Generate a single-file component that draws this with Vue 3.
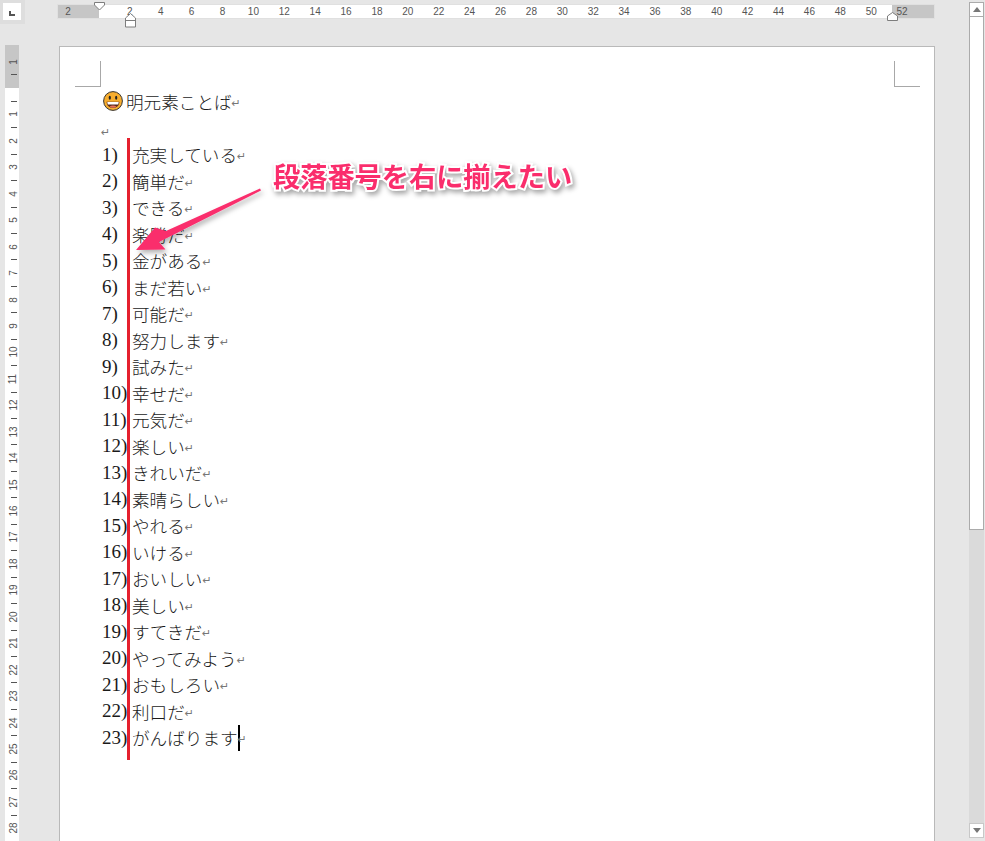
<script setup>
const items = ['充実している','簡単だ','できる','楽勝だ','金がある','まだ若い','可能だ','努力します','試みた','幸せだ','元気だ','楽しい','きれいだ','素晴らしい','やれる','いける','おいしい','美しい','すてきだ','やってみよう','おもしろい','利口だ','がんばります']
const hNums = ['2','']
for (let n = 2; n <= 50; n += 2) hNums.push(String(n))
hNums.push('52')
const vRows = [{t:'1'},{k:1},{},{k:1}]
for (let n = 1; n <= 28; n++) { vRows.push({t:String(n)}); if (n < 28) vRows.push({k:1}) }
</script>

<template>
  <div class="app">
    <div class="corner"><div class="corner-box"><span class="corner-l"></span></div></div>
    <div class="hruler">
      <span v-for="(n,i) in hNums" :key="i" class="hnum">{{ n }}</span>
    </div>
    <div class="scroll">
      <div class="sbtn"><span class="tri-up"></span></div>
      <div class="thumb"></div>
      <div class="track"></div>
      <div class="sbtn down"><span class="tri-down"></span></div>
    </div>
    <div class="vruler">
      <div v-for="(r,i) in vRows" :key="i" class="vrow">
        <span v-if="r.t" class="vnum">{{ r.t }}</span>
        <span v-else-if="r.k" class="vtick"></span>
      </div>
    </div>
    <div class="page">
      <div class="crops"><span class="crop left"></span><span class="crop right"></span></div>
      <div class="line heading">
        <svg class="emoji" viewBox="0 0 20 20" width="20" height="20">
          <circle cx="10" cy="10" r="9.4" fill="#f7ad2e" stroke="#333" stroke-width="1"/>
          <ellipse cx="6.800" cy="6.800" rx="1.100" ry="2" fill="#222"/>
          <ellipse cx="13.200" cy="6.800" rx="1.100" ry="2" fill="#222"/>
          <path d="M3.600 10.800h12.800c0 3.800-2.900 6.200-6.400 6.200s-6.400-2.400-6.400-6.200z" fill="#5a2a1a"/>
          <path d="M4.300 11h11.400c0 1-.2 1.800-.6 2.500H4.900c-.4-.7-.6-1.500-.6-2.500z" fill="#fff"/>
          <path d="M6.500 15.500c1-.7 2.200-1 3.500-1s2.500.3 3.500 1c-1 .8-2.200 1.200-3.500 1.200s-2.500-.4-3.500-1.200z" fill="#e8705a"/>
        </svg>
        <span>明元素ことば</span><span class="mark">↵</span>
      </div>
      <div class="line empty"><span class="mark">↵</span></div>
      <ol class="list">
        <li v-for="(t,i) in items" :key="i" class="line row">
          <span class="num">{{ i + 1 }})</span>
          <span>{{ t }}</span><span v-if="i === items.length - 1" class="cursor"></span><span class="mark">↵</span>
        </li>
      </ol>
    </div>

    <svg class="ind first" width="11" height="9" viewBox="0 0 11 9"><path d="M.5.500h10V3L5.500 8 .5 3z" fill="#fff" stroke="#7d7d7d"/></svg>
    <svg class="ind hang" width="11" height="15" viewBox="0 0 11 15"><path d="M.5 5 5.500.5 10.500 5v9H.5zM.5 7.500h10" fill="#fff" stroke="#7d7d7d"/></svg>
    <svg class="ind right" width="11" height="9" viewBox="0 0 11 9"><path d="M.5 4 5.500.5 10.500 4v4.500H.5z" fill="#fff" stroke="#7d7d7d"/></svg>

    <svg class="overlay" width="985" height="841" viewBox="0 0 985 841">
      <defs>
        <filter id="sh" x="-20%" y="-20%" width="140%" height="150%">
          <feDropShadow dx="2" dy="3" stdDeviation="2.500" flood-color="#000" flood-opacity=".3"/>
        </filter>
      </defs>
      <rect x="127" y="138" width="3" height="622" fill="#e5202e"/>
      <path d="M260 188.500 166 231 155 227.500 136 250 165.500 249.500 159 242 261 190.500z" fill="#fa2d6c" filter="url(#sh)"/>
    </svg>
    <div class="callout">段落番号を右に揃えたい</div>
  </div>
</template>

<style scoped>
.app {
  position: relative;
  width: 985px;
  height: 841px;
  overflow: hidden;
  background: #e6e6e6;
  display: grid;
  grid-template-columns: 59px 910px 16px;
  grid-template-rows: 46px 795px;
  font-family: "Liberation Serif", "Noto Sans CJK JP", serif;
  color: #1a1a1a;
}
.corner { width: 25px; height: 24px; background: #dedede; display: flex; align-items: flex-start; }
.corner-box { width: 18px; height: 17px; margin: 3px; background: #fff; display: flex; align-items: flex-end; }
.corner-l { display: block; width: 6px; height: 5px; margin: 0 0 4px 6px; border-left: 2px solid #555; border-bottom: 2px solid #555; box-sizing: border-box; }
.hruler {
  margin: 5px 0 0 -1px;
  width: 876px;
  height: 13px;
  display: flex;
  background: linear-gradient(to right, #c6c6c6 41px, #fff 41px, #fff 834px, #c6c6c6 834px);
  box-shadow: 0 0 0 1px #e0e0e0;
}
.hnum {
  flex: 0 0 30.9px;
  text-align: center;
  font: 10px/13px "Liberation Sans", sans-serif;
  color: #555;
}
.hnum:first-child { margin-left: -5.4px; }
.scroll {
  grid-column: 3;
  grid-row: 1 / span 2;
  margin: 2px 1px 3px 0;
  display: flex;
  flex-direction: column;
  background: #dadada;
  width: 15px;
}
.sbtn {
  height: 15px;
  background: #fff;
  border: 1px solid #ababab;
  box-sizing: border-box;
  display: flex;
  align-items: center;
  justify-content: center;
  flex: none;
}
.sbtn.down { border-color: #c8c8c8; }
.thumb { height: 513px; background: #fff; border: 1px solid #ababab; border-top: 0; box-sizing: border-box; flex: none; }
.track { flex: 1; }
.tri-up { border: 4px solid transparent; border-top: 0; border-bottom: 5px solid #777; }
.tri-down { border: 4px solid transparent; border-bottom: 0; border-top: 5px solid #777; }
.vruler {
  grid-column: 1;
  grid-row: 2;
  margin: -1px 0 0 5px;
  width: 14px;
  padding: 10px 0 0 3px;
  box-sizing: border-box;
  height: 796px;
  overflow: hidden;
  background: linear-gradient(to bottom, #c6c6c6 43px, #fff 43px);
}
.vrow { height: 13.22px; display: flex; align-items: center; justify-content: center; }
.vnum { font: 10px/10px "Liberation Sans", sans-serif; color: #555; transform: rotate(-90deg); }
.vtick { width: 6px; height: 1px; background: #555; }
.page {
  grid-column: 2;
  grid-row: 2;
  width: 876px;
  height: 820px;
  box-sizing: border-box;
  background: #fff;
  border: 1px solid #b9b9b9;
  padding: 14px 14px 0 15px;
}
.crops { display: flex; justify-content: space-between; height: 26px; margin-bottom: 1px; }
.crop { width: 26px; height: 26px; box-sizing: border-box; border-bottom: 1px solid #a8a8a8; }
.crop.left { border-right: 1px solid #a8a8a8; }
.crop.right { border-left: 1px solid #a8a8a8; }
.line { display: flex; align-items: center; height: 26.5px; padding-left: 27px; font-size: 17.6px; font-weight: 300; white-space: nowrap; }
.heading { padding-left: 28px; }
.emoji { flex: none; margin-right: 3px; }
.empty { align-items: flex-end; height: 27px; }
.empty .mark { margin-left: -1px; margin-bottom: 4px; }
.list { list-style: none; margin: 0; padding: 0; }
.num { width: 30px; flex: none; font-size: 19px; font-weight: 400; }
.mark { font: 11px/1 "DejaVu Sans", sans-serif; color: #777; margin-top: 4px; }
.cursor { width: 2px; height: 26px; background: #000; margin: 0 -2px 0 0; flex: none; }
.ind { position: absolute; }
.ind.first { left: 94px; top: 2px; }
.ind.hang { left: 125px; top: 13px; }
.ind.right { left: 887px; top: 12px; }
.overlay { position: absolute; left: 0; top: 0; pointer-events: none; }
.callout {
  position: absolute;
  left: 273px;
  top: 157px;
  font: 700 27.2px/36px "Noto Sans CJK JP", sans-serif;
  color: #fa2d6c;
  white-space: nowrap;
  -webkit-text-stroke: 4px #fff;
  paint-order: stroke fill;
  filter: drop-shadow(2px 3px 2.5px rgba(0,0,0,.35));
}
</style>
